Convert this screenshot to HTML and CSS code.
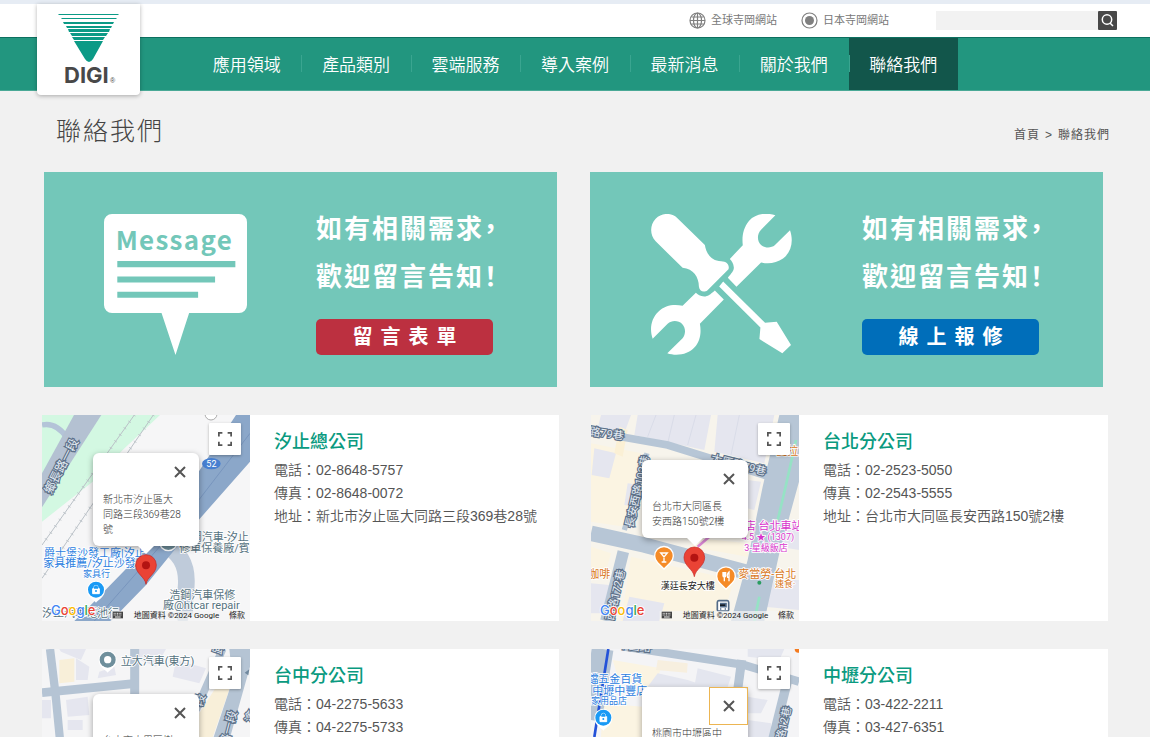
FILE: index.html
```html
<!DOCTYPE html>
<html lang="zh-Hant">
<head>
<meta charset="utf-8">
<meta name="viewport" content="width=device-width, initial-scale=1">
<title>聯絡我們 - DIGI</title>
<link rel="stylesheet" href="styles.css">
</head>
<body>
<svg class="defs" aria-hidden="true">
  <symbol id="expand" viewBox="0 0 16 16"><path d="M1 5V1h4M11 1h4v4M15 11v4h-4M5 15H1v-4" fill="none" stroke="#555" stroke-width="2"/></symbol>
  <symbol id="close" viewBox="0 0 12 12"><path d="M1 1l10 10M11 1L1 11" fill="none" stroke="#555" stroke-width="2"/></symbol>
  <symbol id="marker" viewBox="0 0 64 90" overflow="visible"><path d="M32 89C29 66 1 58 1 31a31 31 0 0 1 62 0C63 58 35 66 32 89Z" fill="#ea4335" stroke="#c5221f" stroke-width="2"/><circle cx="32" cy="32" r="12" fill="#b31412"/></symbol>
  <symbol id="shop" viewBox="0 0 58 70"><path d="M29 68C25 60 2 52 2 29a27 27 0 0 1 54 0C56 52 33 60 29 68Z" fill="#fff"/><circle cx="29" cy="29" r="24" fill="#1a9af5"/><path d="M19 26h20v15H19ZM23 26v-4a6 6 0 0 1 12 0v4" fill="#fff" stroke="#fff" stroke-width="3"/><path d="M23 22a6 6 0 0 1 12 0v4H23Z" fill="#1a9af5"/><circle cx="29" cy="33" r="3" fill="#1a9af5"/></symbol>
  <symbol id="dot" viewBox="0 0 58 70"><path d="M29 68C25 60 2 52 2 29a27 27 0 0 1 54 0C56 52 33 60 29 68Z" fill="#fff"/><circle cx="29" cy="29" r="24" fill="#6f8f9c"/><circle cx="29" cy="29" r="11" fill="#fff"/></symbol>
  <symbol id="credit" viewBox="0 0 624 618">
    <path d="M206 588H624v30H206Z" fill="#f5f5f5" opacity=".7"/>
    <path d="M212 590h31v20h-31Z" fill="#444"/><path d="M215 595h25M215 600h25" stroke="#eee" stroke-width="3" stroke-dasharray="3 2"/><path d="M219 606h17" stroke="#eee" stroke-width="3"/>
    <text class="wordmark" x="27" y="601"><tspan fill="#4285f4">G</tspan><tspan fill="#ea4335">o</tspan><tspan fill="#fbbc04">o</tspan><tspan fill="#4285f4">g</tspan><tspan fill="#34a853">l</tspan><tspan fill="#ea4335">e</tspan></text>
    <text class="legal" x="275" y="609">地圖資料 ©2024 Google</text><text class="legal" x="561" y="609">條款</text>
  </symbol>
</svg>

<header class="header">
  <a class="logo" href="#" aria-label="DIGI">
    <svg viewBox="0 0 103 91">
      <g fill="#0b9a86"><path d="M21 10h61l-1 1H22ZM24 14h56l-1 1H25ZM26 18h51l-1 2H27ZM29 22h46l-1 2H30ZM31 25h42l-1 3H32ZM33 29h38l-2 3H35ZM35 33h33l-2 3H37ZM37 37h29L56 55q-4 6-8 0Z"/></g>
      <text class="logo-name" x="27" y="79">DIGI</text><text class="logo-mark" x="73" y="79">®</text>
    </svg>
  </a>
  <div class="topbar">
    <a class="site" href="#"><svg viewBox="0 0 17 17" fill="none" stroke="#808080" stroke-width="1.200"><circle cx="8.500" cy="8.500" r="7.500"/><ellipse cx="8.500" cy="8.500" rx="4" ry="7.500"/><path d="M8.500 1v15M1 8.500h15M2.500 5h12M2.500 12h12"/></svg>全球寺岡網站</a>
    <a class="site" href="#"><svg viewBox="0 0 17 17"><circle cx="8.500" cy="8.500" r="7.500" fill="none" stroke="#808080" stroke-width="1.200"/><circle cx="8.500" cy="8.500" r="4.500" fill="#808080"/></svg>日本寺岡網站</a>
    <form class="search"><input type="text" aria-label="搜尋"><button type="button" aria-label="搜尋"><svg viewBox="0 0 19 19" fill="none" stroke="#fff" stroke-width="1.500"><circle cx="9" cy="8.500" r="4.700"/><path d="M12 12l3 3"/></svg></button></form>
  </div>
  <nav class="nav"><ul>
    <li><a href="#">應用領域</a></li><li><a href="#">產品類別</a></li><li><a href="#">雲端服務</a></li><li><a href="#">導入案例</a></li><li><a href="#">最新消息</a></li><li><a href="#">關於我們</a></li><li class="active"><a href="#">聯絡我們</a></li>
  </ul></nav>
</header>

<main>
  <div class="heading">
    <h1>聯絡我們</h1>
    <div class="crumbs"><a href="#">首頁</a><span>&gt;</span><span>聯絡我們</span></div>
  </div>

  <section class="banners">
    <div class="banner">
      <svg class="art" viewBox="191 147 430 424"><path d="M215 147H597a24 24 0 0 1 24 24V421a24 24 0 0 1-24 24H447L406 571 364 445H215a24 24 0 0 1-24-24V171a24 24 0 0 1 24-24Z" fill="#fff"/><path d="M231 288H586v19H231ZM231 335H525v18H231ZM231 381H474v18H231Z" fill="#73c7b9"/><text class="message" x="226" y="256">Message</text></svg>
      <div class="pitch"><p>如有相關需求，<br>歡迎留言告知！</p><a class="cta red" href="#">留言表單</a></div>
    </div>
    <div class="banner">
      <svg class="art" viewBox="194 148 430 424" fill="#fff"><path d="M571 152L528 195C514 210 517 232 528 241C540 252 560 250 569 242L615 197C626 228 620 262 594 282C575 296 550 299 528 294L454 367 428 340C440 325 447 318 446 308C445 297 441 290 434 283L473 242C470 215 474 190 492 168C512 146 545 143 571 152ZM202 523L247 478C260 466 280 468 290 478C302 490 302 508 292 522L246 567C275 577 310 570 328 549C345 530 349 505 344 478L416 405 389 378C375 390 368 396 357 396C345 396 337 390 332 385L292 424C265 419 240 422 219 442C197 463 192 495 202 523ZM211 162C230 143 260 144 275 159L359 241C362 262 375 289 408 290C425 290 434 302 430 314L367 377C356 386 342 380 341 366C341 340 325 312 292 310L211 230C193 212 193 181 211 162ZM414 351L540 475 575 472 618 542 592 567 523 524 526 489 402 366Z"/></svg>
      <div class="pitch"><p>如有相關需求，<br>歡迎留言告知！</p><a class="cta blue" href="#">線上報修</a></div>
    </div>
  </section>

  <section class="offices">
    <article class="office">
      <div class="map">
        <svg class="tiles" viewBox="8 15 624 618" preserveAspectRatio="xMidYMin slice">
          <path d="M8 15H632V633H8Z" fill="#f6f6f7"/><path d="M8 15H362L250 120 160 215 8 335Z" fill="#d3f8e2"/>
          <path d="M8 45Q50 35 85 85" fill="none" stroke="#b4c4d8" stroke-width="16"/>
          <path d="M104 15H186L8 292V190Z" fill="#b4c1d2"/>
          <g fill="none" stroke="#bac1c7" stroke-width="3"><path d="M285 15L8 405M342 15L8 505"/><g stroke-width="10" stroke-dasharray="2 22"><path d="M285 15L8 405M342 15L8 505"/></g></g>
          <path d="M375 405Q450 440 440 535T445 633" fill="none" stroke="#bfcbda" stroke-width="50"/>
          <path d="M590 15H632V155L478 330 320 525 215 633H105L145 595 330 405 478 185Z" fill="#8ba7c9"/><path d="M632 70L440 320 165 633" fill="none" stroke="#7895bd" stroke-width="3"/>
          <circle cx="515" cy="12" r="18" fill="#fff" stroke="#aaa" stroke-width="3"/>
          <ellipse cx="516" cy="161" rx="28" ry="17" fill="#477fd0"/><text class="t9 light" x="501" y="171">52</text>
          <text class="t12 road" transform="translate(36 254) rotate(-63)">鄉長路一段</text>
          <g class="t11 blue-label"><text x="14" y="440">爵士堡沙發工廠|汐止</text><text x="12" y="472">家具推薦/汐止沙發</text></g><text class="t9 blue-label" x="131" y="500">家具行</text>
          <use href="#shop" x="141" y="510" width="58" height="70"/>
          <circle cx="387" cy="395" r="27" fill="#6f8f9c" stroke="#fff" stroke-width="4"/>
          <g class="t11 place"><text x="454" y="393">鋼汽車-汐止</text><text x="420" y="425">修車保養廠/賓</text><text x="390" y="566">浩鋼汽車保修</text><text x="371" y="598">廠@htcar repair</text><text x="8" y="622">汐止汽車電池行</text></g>
          <use href="#credit" x="8" y="15" width="624" height="618"/>
          <use href="#marker" x="288" y="434" width="64" height="90"/>
        </svg>
        <button class="full" type="button" aria-label="全螢幕"><svg><use href="#expand"/></svg></button>
        <div class="popup high"><button type="button" aria-label="關閉"><svg><use href="#close"/></svg></button><p>新北市汐止區大<br>同路三段369巷28<br>號</p></div>
      </div>
      <div class="info"><h2>汐止總公司</h2><p>電話：02-8648-5757</p><p>傳真：02-8648-0072</p><p>地址：新北市汐止區大同路三段369巷28號</p></div>
    </article>

    <article class="office">
      <div class="map">
        <svg class="tiles" viewBox="10 15 624 618" preserveAspectRatio="xMidYMin slice">
          <path d="M10 15H634V633H10Z" fill="#f7f4ec"/>
          <path d="M10 100L160 130 110 350 10 335ZM10 410L70 430 50 500 10 510ZM130 440L440 510 400 633H100ZM330 385L480 400V440L310 410Z" fill="#fbf4e2"/>
          <path d="M40 15H130L110 70 30 55ZM150 15H370L350 120 140 75ZM390 15H560L530 160 380 125ZM20 115L85 130 65 205 12 195ZM120 220L160 225 150 290 110 285ZM10 520L65 525 45 610H10ZM125 560L230 580 215 633H105ZM480 210L520 215 500 300 478 295ZM590 350H634V420L575 410ZM560 510H634V600L530 590Z" fill="#e5e6ef"/>
          <path d="M205 15L180 80M260 15L240 100M325 15L300 105M455 15L430 135" stroke="#d9dce8" stroke-width="3"/>
          <path d="M95 50L120 60 105 140 80 130Z" fill="#fbf0d5"/>
          <g fill="none" stroke="#b7c6d6"><path d="M100 80L240 105 545 200" stroke-width="23"/><path d="M10 370L170 405 490 490" stroke-width="46"/><path d="M178 130L110 360" stroke-width="16"/><path d="M107 425L55 633" stroke-width="35"/></g>
          <path d="M575 15H634V215L575 430 530 633H430L480 450 525 230Z" fill="#b7c6d6"/><path d="M625 90Q590 250 570 330M515 560L500 633" fill="none" stroke="#96e2c5" stroke-width="8"/>
          <path d="M330 410L365 380" stroke="#d987d4" stroke-width="8"/>
          <g class="t11 road"><text transform="translate(4 75) rotate(8)">路79巷</text><text transform="translate(368 155) rotate(14)">太原路79巷</text><text transform="translate(135 355) rotate(-77)">長安西路102巷</text><text transform="translate(77 633) rotate(-77)">西路172巷</text></g>
          <text class="t11 food" x="566" y="136">曼拉</text>
          <g class="hotel"><text class="t11" x="471" y="360">店 台北車站</text><text class="t9" x="462" y="391">4.5 ★ (1307)</text><text class="t9" x="470" y="422">3-星級飯店</text></g>
          <g stroke="#fff" stroke-width="4" fill="#f58b27"><path d="M229 477L210 458A28 28 0 1 1 248 458ZM415 538L396 519A28 28 0 1 1 434 519Z"/></g>
          <path d="M219 429h20l-10 12ZM229 440v16M222 456h14M406 486v11q0 4 4 4t4-4v-11M410 486v28M424 514v-28q-7 6-4 16h4" fill="none" stroke="#fff" stroke-width="4"/>
          <text class="t11 food" x="2" y="503">咖啡</text><text class="t11 food" x="452" y="503">麥當勞-台北</text><text class="t9 food" x="562" y="530">速食·</text>
          <text class="t9 black-label" x="219" y="537">漢廷長安大樓</text><circle cx="515" cy="518" r="6" fill="#299d60"/>
          <path d="M393 572h26q4 0 4 5v22q0 4-4 4h-26q-4 0-4-4v-22q0-5 4-5Z" fill="#fff" stroke="#526b88" stroke-width="5"/><path d="M397 581h18v9h-18M397 597h4M411 597h4" stroke="#526b88" stroke-width="5"/>
          <use href="#credit" x="10" y="15" width="624" height="618"/>
          <use href="#marker" x="288" y="411" width="64" height="90"/>
        </svg>
        <button class="full" type="button" aria-label="全螢幕"><svg><use href="#expand"/></svg></button>
        <div class="popup"><button type="button" aria-label="關閉"><svg><use href="#close"/></svg></button><p>台北市大同區長<br>安西路150號2樓</p></div>
      </div>
      <div class="info"><h2>台北分公司</h2><p>電話：02-2523-5050</p><p>傳真：02-2543-5555</p><p>地址：台北市大同區長安西路150號2樓</p></div>
    </article>

    <article class="office">
      <div class="map">
        <svg class="tiles" viewBox="8 27 624 618" preserveAspectRatio="xMidYMin slice">
          <path d="M8 27H632V645H8Z" fill="#f5f5f6"/>
          <path d="M60 27H140L125 60 65 35ZM290 27H380L350 80 280 50ZM410 60L500 85 480 130 400 110ZM180 95L225 80 230 105 175 115ZM80 180L145 170 150 225 85 230ZM85 240H130V270H85ZM8 180H35V235H8ZM110 55L150 80 145 120H110Z" fill="#e5e6ef"/>
          <path d="M60 60L105 55V125L60 130ZM550 110L580 120 520 291H480V220Z" fill="#f8efd9"/>
          <g fill="none" stroke="#b5c4d4"><path d="M32 27Q50 160 62 300" stroke-width="25"/><path d="M8 158L290 130" stroke-width="26"/><path d="M286 27V180" stroke-width="27"/><path d="M550 27L470 210" stroke-width="23"/></g>
          <path d="M570 27H632V80L570 300H520L580 120Z" fill="#b5c4d4"/>
          <use href="#dot" x="176" y="30" width="58" height="70"/><text class="t11 place" x="244" y="75">立大汽車(東方)</text>
          <g class="t12 road"><text transform="translate(565 320) rotate(-75)">路一段</text><text transform="translate(476 235) rotate(-72)">一段</text><text transform="translate(545 45) rotate(-72)">路</text><text transform="translate(642 250) rotate(-75)">塗</text></g><path d="M616 98l14-10-3 18Z" fill="#71899e"/>
        </svg>
        <button class="full" type="button" aria-label="全螢幕"><svg><use href="#expand"/></svg></button>
        <div class="popup"><button type="button" aria-label="關閉"><svg><use href="#close"/></svg></button><p>台中市大里區樹</p></div>
      </div>
      <div class="info"><h2>台中分公司</h2><p>電話：04-2275-5633</p><p>傳真：04-2275-5733</p></div>
    </article>

    <article class="office">
      <div class="map">
        <svg class="tiles" viewBox="10 27 624 618" preserveAspectRatio="xMidYMin slice">
          <path d="M10 27H634V645H10Z" fill="#f4f4f6"/>
          <path d="M75 60L220 85 200 140H150L90 110ZM45 190L165 200V291H40Z" fill="#fbf4e2"/>
          <path d="M210 100L300 120 360 140H180ZM330 85L430 110 420 140H320ZM480 170L540 180 520 220H480ZM480 240L550 250V291H480ZM480 27L590 27 575 60 480 50Z" fill="#e4e6ef"/><path d="M210 60L300 70 298 98 205 90Z" fill="#f7efdf"/>
          <g fill="none" stroke="#b5c4d4"><path d="M110 20L470 75 634 125" stroke-width="25"/><path d="M462 60L450 150" stroke-width="27"/><path d="M600 120L555 300" stroke-width="28"/><path d="M45 27L10 240" stroke-width="65"/></g>
          <path d="M62 27L20 291" stroke="#2452d8" stroke-width="8"/>
          <g class="t11 road"><text transform="translate(90 24) rotate(6)">中園路</text><text transform="translate(580 335) rotate(-77)">園路12巷</text></g>
          <g class="t11 blue-label"><text x="-1" y="130">鐺五金百貨</text><text x="14" y="165">中壢中豐店</text></g><text class="t9 blue-label" x="10" y="193">家用品店</text>
          <use href="#shop" x="18" y="204" width="58" height="70"/><circle cx="632" cy="27" r="11" fill="#f47b20"/>
        </svg>
        <button class="full" type="button" aria-label="全螢幕"><svg><use href="#expand"/></svg></button>
        <div class="popup high"><button class="focused" type="button" aria-label="關閉"><svg><use href="#close"/></svg></button><p>桃園市中壢區中</p></div>
      </div>
      <div class="info"><h2>中壢分公司</h2><p>電話：03-422-2211</p><p>傳真：03-427-6351</p></div>
    </article>
  </section>
</main>
</body>
</html>
```
FILE: styles.css
```css
* { box-sizing: border-box; }
body { margin: 0; background: #f1f1f1; color: #555; font-family: "Liberation Sans", "Noto Sans CJK TC", sans-serif; }
a { color: inherit; text-decoration: none; }
h1, h2, p, ul { margin: 0; padding: 0; }
button { border: 0; padding: 0; cursor: pointer; }
svg { display: block; }
.defs { position: absolute; width: 0; height: 0; }

.header { position: relative; border-top: 4px solid #e6ecf4; }
.logo { position: absolute; z-index: 2; top: 0; left: 37px; width: 103px; background: #fff; border-radius: 0 0 4px 4px; box-shadow: 0 1px 4px rgba(0, 0, 0, .3); }
.logo-name { font: 700 22px Inter, sans-serif; fill: #484848; }
.logo-mark { font: 7px "Liberation Sans", sans-serif; fill: #484848; }
.topbar { display: flex; justify-content: flex-end; align-items: center; height: 33px; padding-right: 33px; background: #fff; }
.site { display: flex; align-items: center; gap: 5px; margin-right: 24px; font-size: 11px; line-height: 15px; color: #777; }
.site svg { width: 17px; height: 17px; }
.search { display: flex; margin-left: 23px; }
.search input { width: 162px; height: 19px; border: 0; padding: 0 4px; background: #f2f2f2; }
.search button { width: 19px; height: 19px; border-radius: 1px; background: #484848; }

.nav { background: #22967f; border-top: 1px solid #0d7060; border-bottom: 1px solid #4aa996; }
.nav ul { display: grid; grid-template-columns: repeat(7, 1fr); max-width: 766px; margin: 0 auto; list-style: none; }
.nav a { position: relative; display: block; padding-top: 4px; line-height: 48px; text-align: center; font-size: 17px; font-weight: 350; color: #fff; }
.nav li + li a::before { content: ""; position: absolute; left: 0; top: 17px; height: 17px; border-left: 1px solid #3aa590; }
.nav .active { background: #12564b; }

.heading { display: flex; justify-content: space-between; align-items: center; padding: 0 40px 0 56px; }
.heading h1 { font-size: 25px; font-weight: 300; letter-spacing: 2px; line-height: 81px; color: #444; }
.crumbs { display: flex; align-items: baseline; gap: 5px; padding-top: 4px; font-size: 12px; letter-spacing: 1px; }

.banners { display: grid; grid-template-columns: 1fr 1fr; gap: 33px; padding: 0 47px 28px 44px; }
.banner { display: flex; gap: 69px; padding: 33px 0 32px 60px; background: #73c7b9; }
.art { flex: none; width: 143px; height: 141px; margin-top: 9px; }
.message { font: 700 78px "Noto Sans CJK TC", sans-serif; letter-spacing: 4px; fill: #73c7b9; }
.pitch { color: #fff; font-weight: 700; white-space: nowrap; }
.pitch p { font-size: 26px; line-height: 48px; letter-spacing: 2px; font-feature-settings: "halt"; }
.cta { display: block; width: 177px; margin-top: 18px; padding-left: 8px; border-radius: 5px; line-height: 36px; text-align: center; font-size: 20px; letter-spacing: 8px; }
.red { background: #bc3040; }
.blue { background: #006eba; }

.offices { display: grid; grid-template-columns: 1fr 1fr; gap: 28px 32px; padding: 0 42px; }
.office { display: flex; min-height: 206px; background: #fff; }
.map { position: relative; flex: none; width: 208px; overflow: hidden; }
.tiles { width: 100%; height: 100%; }
.info { padding: 13px 12px 0 24px; }
.info h2 { margin-bottom: 3px; font-size: 18px; font-weight: 500; line-height: 28px; color: #0a9a80; }
.info p { font-size: 14px; line-height: 23px; font-weight: 350; }

.full { position: absolute; top: 8px; right: 9px; display: grid; place-items: center; width: 32px; height: 32px; background: #fff; box-shadow: 0 1px 3px rgba(0, 0, 0, .3); border-radius: 1px; }
.full svg { width: 14px; height: 14px; }
.popup { position: absolute; top: 45px; left: 51px; width: 106px; padding: 39px 0 9px 10px; background: #fff; border-radius: 6px; box-shadow: 0 2px 6px rgba(0, 0, 0, .35); }
.popup.high { top: 38px; }
.popup::after { content: ""; position: absolute; top: 100%; left: 45px; border: 8px solid transparent; border-top-color: #fff; border-bottom: 0; }
.popup p { font: 300 10px/15px Roboto, "Noto Sans CJK TC", sans-serif; color: #333; white-space: nowrap; }
.popup button { position: absolute; top: 0; right: 0; display: grid; place-items: center; width: 39px; height: 38px; background: transparent; }
.popup .focused { border: 1px solid #ecb552; }
.popup button svg { width: 12px; height: 12px; }

.tiles text { font-family: Roboto, "Noto Sans CJK TC", sans-serif; }
.t9 { font-size: 27px; }
.t11 { font-size: 33px; }
.t12 { font-size: 36px; }
.road, .place, .blue-label, .food, .hotel, .black-label { stroke: #fff; stroke-width: 5px; paint-order: stroke; }
.road { fill: #e6edf5; stroke: #5d7189; stroke-width: 7px; }
.place { fill: #55727e; }
.blue-label { fill: #2c80df; }
.food { fill: #d97721; }
.hotel { fill: #d733cb; }
.black-label { fill: #222; }
.light { fill: #fff; }
.wordmark { font: 500 39px Inter, sans-serif; stroke: #fff; stroke-width: 5px; paint-order: stroke; }
.legal { font: 24px Roboto, "Noto Sans CJK TC", sans-serif; fill: #222; }
```
